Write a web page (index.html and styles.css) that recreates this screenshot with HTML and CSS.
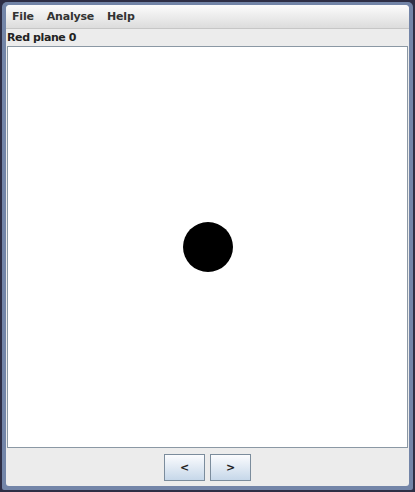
FILE: index.html
```html
<!DOCTYPE html>
<html>
<head>
<meta charset="utf-8">
<link rel="stylesheet" href="styles.css">
</head>
<body>
<div class="frame">
  <div class="window">
    <div class="menubar">
      <span class="menu">File</span>
      <span class="menu">Analyse</span>
      <span class="menu">Help</span>
    </div>
    <div class="label">Red plane 0</div>
    <div class="canvas">
      <div class="dot"></div>
    </div>
    <div class="buttons">
      <button class="btn">&lt;</button>
      <button class="btn">&gt;</button>
    </div>
  </div>
</div>
</body>
</html>
```
FILE: styles.css
```css
html, body {
  margin: 0;
  padding: 0;
  width: 415px;
  height: 492px;
  background: #2e2e45;
  overflow: hidden;
}
.frame {
  margin: 2px;
  padding: 3px 4px 4px 4px;
  height: 481px;
  background: #7385a8;
  border-radius: 5px 5px 2px 2px;
}
.window {
  height: 481px;
  display: flex;
  flex-direction: column;
  background: #ececec;
  border-radius: 4px 4px 3px 3px;
  overflow: hidden;
  font-family: "DejaVu Sans", sans-serif;
  font-weight: bold;
  font-size: 11px;
  letter-spacing: -0.2px;
}
.menubar {
  height: 23px;
  display: flex;
  align-items: center;
  background: linear-gradient(#fcfcfc, #dcdcdc);
  border-bottom: 1px solid #c6c6c6;
  color: #333;
}
.menu {
  padding: 0 6px 0 6px;
  margin-right: 1px;
}
.label {
  height: 17px;
  line-height: 17px;
  padding-left: 1px;
  color: #222;
  letter-spacing: -0.4px;
}
.canvas {
  height: 400px;
  margin: 0 1px;
  border: 1px solid #8b98a4;
  background: #fff;
  display: flex;
  align-items: center;
  justify-content: center;
}
.dot {
  width: 50px;
  height: 50px;
  border-radius: 50%;
  background: #000;
}
.buttons {
  flex: 1;
  display: flex;
  align-items: center;
  justify-content: center;
  gap: 5px;
  padding-top: 1px;
}
.btn {
  width: 41px;
  height: 27px;
  margin: 0;
  padding: 0;
  border: 1px solid #7b8c9c;
  background: linear-gradient(#fbfcfe, #c6d7e9);
  font-family: "DejaVu Sans", sans-serif;
  font-weight: bold;
  font-size: 11px;
  color: #222;
}
```
